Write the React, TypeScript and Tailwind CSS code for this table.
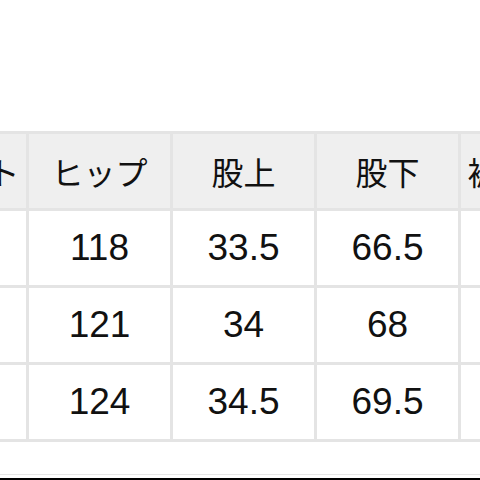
const headers = ["ウエスト", "ヒップ", "股上", "股下", "裾まわり"]

const rows = [
  ["", "118", "33.5", "66.5", ""],
  ["", "121", "34", "68", ""],
  ["", "124", "34.5", "69.5", ""],
]

export default function App() {
  return (
    <div className="w-[480px] h-[480px] bg-white overflow-hidden flex flex-col">
      <div className="pt-[131px]">
        <div className="ml-[-118px] w-max grid grid-cols-[repeat(5,141px)] gap-[3px] p-[3px] bg-[#e4e4e4]">
          {headers.map((h) => (
            <div
              key={h}
              className="h-[74px] bg-[#efefef] flex items-center justify-center text-[32px] text-[#111] whitespace-nowrap font-['Noto_Sans_CJK_JP',sans-serif]"
            >
              {h}
            </div>
          ))}
          {rows.map((row, i) =>
            row.map((v, j) => (
              <div
                key={`${i}-${j}`}
                className="h-[74px] bg-white flex items-center justify-center text-[37px] text-[#111] font-['Liberation_Sans','Noto_Sans_CJK_JP',sans-serif]"
              >
                {v}
              </div>
            ))
          )}
        </div>
      </div>
      <div className="flex-1" />
      <div className="h-[4px] border-t border-[#e6e6e6]" />
      <div className="h-[2px] bg-black" />
    </div>
  )
}
